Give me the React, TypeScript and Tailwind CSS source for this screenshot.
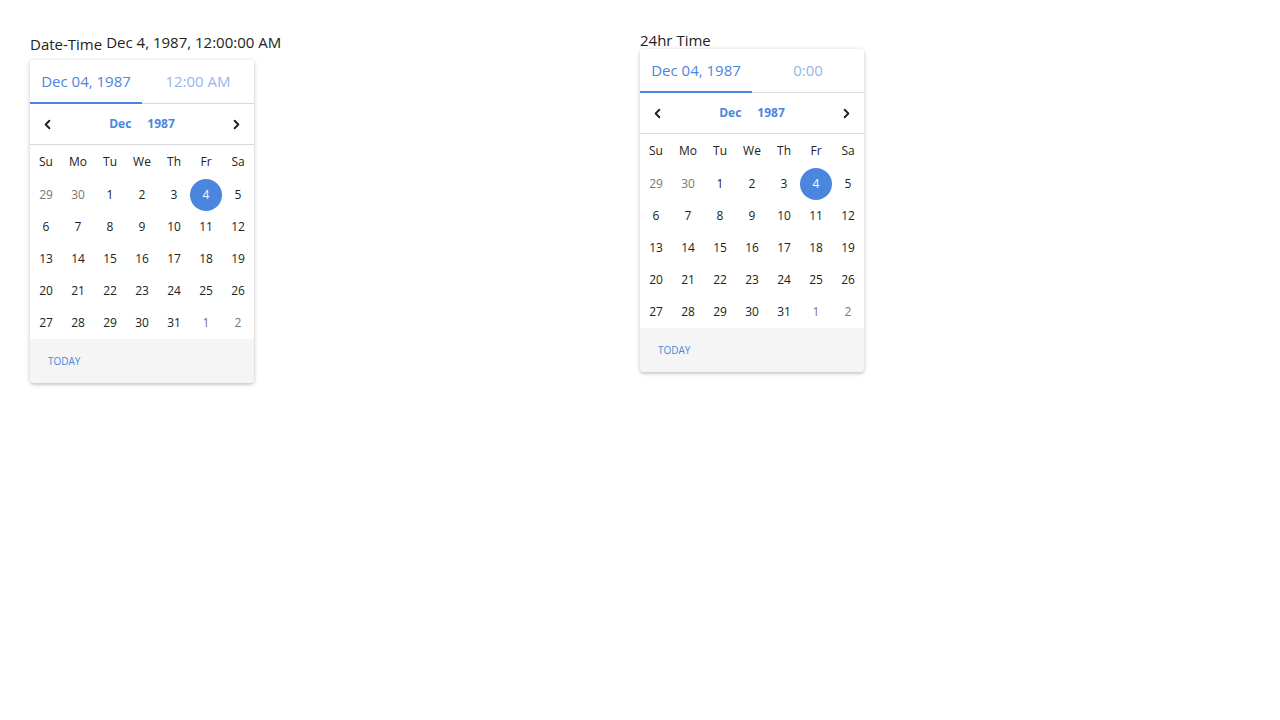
import { ChevronLeft, ChevronRight } from 'lucide-react'

const weekdays = ['Su', 'Mo', 'Tu', 'We', 'Th', 'Fr', 'Sa']

const weeks: { d: number; muted?: boolean; selected?: boolean }[][] = [
  [{ d: 29, muted: true }, { d: 30, muted: true }, { d: 1 }, { d: 2 }, { d: 3 }, { d: 4, selected: true }, { d: 5 }],
  [{ d: 6 }, { d: 7 }, { d: 8 }, { d: 9 }, { d: 10 }, { d: 11 }, { d: 12 }],
  [{ d: 13 }, { d: 14 }, { d: 15 }, { d: 16 }, { d: 17 }, { d: 18 }, { d: 19 }],
  [{ d: 20 }, { d: 21 }, { d: 22 }, { d: 23 }, { d: 24 }, { d: 25 }, { d: 26 }],
  [{ d: 27 }, { d: 28 }, { d: 29 }, { d: 30 }, { d: 31 }, { d: 1, muted: true }, { d: 2, muted: true }],
]

function Calendar({ time }: { time: string }) {
  return (
    <div className="w-[224px] bg-white rounded-[4px] shadow-[0_1px_5px_rgba(0,0,0,0.2),0_2px_2px_rgba(0,0,0,0.08)] overflow-hidden">
      <div className="flex h-[44px] border-b border-[#d9d9d9]">
        <div className="w-1/2 flex items-center justify-center text-[15px] text-[#4a86de] border-b-2 border-[#4a86de] -mb-px">
          Dec 04, 1987
        </div>
        <div className="w-1/2 flex items-center justify-center text-[15px] text-[#93b6ec]">{time}</div>
      </div>
      <div className="flex items-center h-[41px] px-[10px] border-b border-[#d9d9d9]">
        <ChevronLeft className="w-[15px] h-[15px] text-[#222]" strokeWidth={3} />
        <div className="flex-1 flex justify-center gap-[16px] text-[12px] font-bold text-[#4a86de]">
          <span>Dec</span>
          <span>1987</span>
        </div>
        <ChevronRight className="w-[15px] h-[15px] text-[#222]" strokeWidth={3} />
      </div>
      <div className="grid grid-cols-7 h-[34px] items-center text-[12px] text-[#222]">
        {weekdays.map((w) => (
          <div key={w} className="text-center">{w}</div>
        ))}
      </div>
      {weeks.map((wk, i) => (
        <div key={i} className="grid grid-cols-7 h-[32px] text-[12px]">
          {wk.map((c, j) => (
            <div key={j} className="flex items-center justify-center">
              {c.selected ? (
                <div className="w-[32px] h-[32px] rounded-full bg-[#4a86de] text-white flex items-center justify-center">
                  {c.d}
                </div>
              ) : (
                <span className={c.muted ? 'text-[#777]' : 'text-[#222]'}>{c.d}</span>
              )}
            </div>
          ))}
        </div>
      ))}
      <div className="bg-[#f5f5f5] h-[44px] flex items-center px-[18px] text-[10px] text-[#4a86de]">TODAY</div>
    </div>
  )
}

export default function App() {
  return (
    <div className="min-h-screen bg-white text-[#222] font-['Open_Sans',sans-serif] flex pt-[32px] pl-[30px]">
      <div className="w-[610px]">
        <div className="flex items-end h-[20px] mb-[8px]">
          <span className="text-[15px] leading-[20px] translate-y-[2px]">Date-Time</span>
          <span className="text-[15px] leading-[20px] ml-[4px]">Dec 4, 1987, 12:00:00 AM</span>
        </div>
        <Calendar time="12:00 AM" />
      </div>
      <div>
        <div className="text-[15px] leading-[16px] mb-[1px]">24hr Time</div>
        <Calendar time="0:00" />
      </div>
    </div>
  )
}
